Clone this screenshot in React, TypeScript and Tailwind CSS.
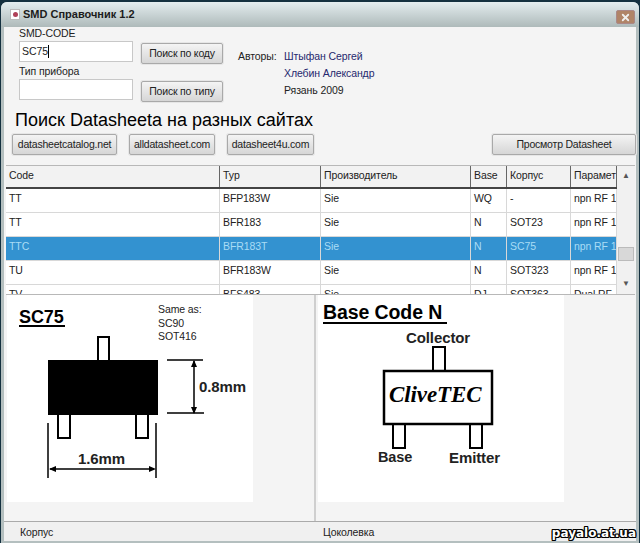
import { X } from 'lucide-react';

const COLUMNS = [
  { label: 'Code', width: 'w-[214px]' },
  { label: 'Typ', width: 'w-[101px]' },
  { label: 'Производитель', width: 'w-[150px]' },
  { label: 'Base', width: 'w-[36px]' },
  { label: 'Корпус', width: 'w-[64px]' },
  { label: 'Парамет', width: 'w-[46px]' },
];

const ROWS = [
  ['TT', 'BFP183W', 'Sie', 'WQ', '-', 'npn RF 12'],
  ['TT', 'BFR183', 'Sie', 'N', 'SOT23', 'npn RF 12'],
  ['TTC', 'BFR183T', 'Sie', 'N', 'SC75', 'npn RF 12'],
  ['TU', 'BFR183W', 'Sie', 'N', 'SOT323', 'npn RF 12'],
  ['TV', 'BFS483', 'Sie', 'DJ', 'SOT363', 'Dual RF'],
];

const WinButton = ({ children, className }: { children: string; className: string }) => (
  <button className={`h-[21px] rounded-[2px] border border-[#a9a9a9] bg-gradient-to-b from-[#f4f4f4] to-[#d6d6d6] text-[10.5px] leading-none tracking-[-0.2px] text-[#222] shadow-[0_0_0_1px_#e6e6e6] ${className}`}>
    {children}
  </button>
);

const TextBox = ({ value }: { value: string }) => (
  <div className="flex h-[21px] w-[114px] items-center border border-[#c8c8c8] bg-white pl-[2px] text-[#222]">
    {value}
    {value && <span className="h-[13px] w-px bg-black" />}
  </div>
);

const PackageDrawing = () => (
  <svg viewBox="0 0 246 207" className="block h-[207px] w-[246px]">
    <text x="12" y="28" fontSize="18" fontWeight="700" fontFamily="Liberation Sans">SC75</text>
    <rect x="12" y="30" width="46" height="2" />
    <text x="151" y="18" fontSize="10.5" fill="#222" fontFamily="Liberation Sans">Same as:</text>
    <text x="151" y="32" fontSize="10.5" fill="#222" fontFamily="Liberation Sans">SC90</text>
    <text x="151" y="45" fontSize="10.5" fill="#222" fontFamily="Liberation Sans">SOT416</text>
    <rect x="91" y="42" width="11" height="24" fill="#fff" stroke="#000" strokeWidth="2" />
    <rect x="51" y="118" width="12" height="25" fill="#fff" stroke="#000" strokeWidth="2" />
    <rect x="129" y="118" width="12" height="25" fill="#fff" stroke="#000" strokeWidth="2" />
    <rect x="41" y="65" width="110" height="55" />
    <g stroke="#000" strokeWidth="1.5">
      <path d="M160 65h36M160 118h37M187 66v52" />
      <path d="M41 128v55M149 128v55M43 174h104" />
    </g>
    <path d="M187 65l-3 7h6zM187 119l-3-7h6zM42 174l7-3v6zM149 174l-7-3v6z" />
    <text x="192" y="97" fontSize="15" fontWeight="700" fill="#222" fontFamily="Liberation Sans">0.8mm</text>
    <text x="71" y="169" fontSize="15" fontWeight="700" fill="#222" fontFamily="Liberation Sans">1.6mm</text>
  </svg>
);

const BaseDrawing = () => (
  <svg viewBox="0 0 246 207" className="block h-[207px] w-[246px]">
    <text x="5" y="24" fontSize="19.5" fontWeight="700" fontFamily="Liberation Sans">Base Code N</text>
    <rect x="5" y="27" width="124" height="2" />
    <text x="88" y="48" fontSize="15" fontWeight="700" fill="#222" fontFamily="Liberation Sans">Collector</text>
    <rect x="115" y="52" width="12" height="24" fill="#fff" stroke="#000" strokeWidth="2" />
    <rect x="75" y="129" width="12" height="24" fill="#fff" stroke="#000" strokeWidth="2" />
    <rect x="152" y="129" width="12" height="24" fill="#fff" stroke="#000" strokeWidth="2" />
    <rect x="66" y="76" width="108" height="53" fill="#fff" stroke="#000" strokeWidth="2.5" />
    <text x="71" y="107" fontSize="23" fontWeight="700" fontStyle="italic" fontFamily="Liberation Serif">CliveTEC</text>
    <text x="60" y="167" fontSize="14.5" fontWeight="700" fill="#222" fontFamily="Liberation Sans">Base</text>
    <text x="131" y="168" fontSize="15" fontWeight="700" fill="#222" fontFamily="Liberation Sans">Emitter</text>
  </svg>
);

export default function App() {
  return (
    <div className="relative h-[543px] w-[640px] overflow-hidden bg-[#14303f] font-['Liberation_Sans',sans-serif] text-[10.5px] tracking-[-0.1px] text-[#222]">
      <div className="mx-[1px] mt-[2px] flex h-[541px] flex-col rounded-t-[6px] bg-[#b4bfbf]">
        {/* title bar */}
        <div className="flex h-[25px] shrink-0 items-center rounded-t-[6px] bg-gradient-to-b from-[#e4edef] to-[#aebaba] pl-[9px] pr-[4px]">
          <div className="flex h-[11px] w-[10px] items-center justify-center border border-[#bbb] bg-white">
            <div className="h-[5px] w-[5px] rounded-full bg-[#b04058]" />
          </div>
          <span className="ml-[3px] text-[11px] font-bold tracking-normal text-[#1c1c1c]">SMD Справочник 1.2</span>
          <div className="ml-auto mt-[5px] flex h-[14px] w-[19px] items-center justify-center rounded-[2px] border border-[#a88] bg-[#b08468]">
            <X size={11} strokeWidth={4} className="text-[#eee]" />
          </div>
        </div>

        <div className="mx-[3px] mb-[2px] flex min-h-0 flex-1 flex-col bg-[#f4f4f4]">
          {/* search form */}
          <div className="flex h-[138px] shrink-0 flex-col pl-[15px] pt-[2px]">
            <div className="flex">
              <div className="w-[122px]">
                <div className="h-[9px] leading-[9px]">SMD-CODE</div>
                <div className="mt-[3px]"><TextBox value="SC75" /></div>
                <div className="mt-[3px] h-[13px] leading-[13px]">Тип прибора</div>
                <div className="mt-[1px]"><TextBox value="" /></div>
              </div>
              <div className="flex w-[82px] flex-col gap-[17px] pt-[14px]">
                <WinButton className="w-[82px]">Поиск по коду</WinButton>
                <WinButton className="w-[82px]">Поиск по типу</WinButton>
              </div>
              <div className="ml-[15px] flex pt-[21px] leading-[13px]">
                <span className="w-[46px]">Авторы:</span>
                <div className="flex flex-col gap-[4px] text-[#26286e]">
                  <span>Штыфан Сергей</span>
                  <span>Хлебин Александр</span>
                  <span className="text-[#222]">Рязань 2009</span>
                </div>
              </div>
            </div>
            <div className="-ml-[4px] mt-[8px] text-[18px] leading-[20px] tracking-normal text-black">Поиск Datasheeta на разных сайтах</div>
            <div className="mt-[4px] flex">
              <WinButton className="-ml-[7px] w-[105px]">datasheetcatalog.net</WinButton>
              <WinButton className="ml-[12px] w-[86px]">alldatasheet.com</WinButton>
              <WinButton className="ml-[12px] w-[87px]">datasheet4u.com</WinButton>
              <WinButton className="ml-auto w-[144px]">Просмотр Datasheet</WinButton>
            </div>
          </div>

          {/* table */}
          <div className="ml-[2px] mr-[1px] flex h-[130px] shrink-0 overflow-hidden border-y border-[#b8b8b8]">
            <div className="w-[611px] shrink-0 bg-white">
              <div className="flex h-[23px] items-center border-b-2 border-[#444] bg-[#f2f2f2]">
                {COLUMNS.map((col) => (
                  <div key={col.label} className={`${col.width} h-full overflow-hidden whitespace-nowrap border-r border-[#666] pl-[3px] leading-[18px]`}>
                    {col.label}
                  </div>
                ))}
              </div>
              {ROWS.map((row, i) => (
                <div
                  key={row[0] + row[1]}
                  className={`flex h-[24px] shrink-0 border-b border-[#d8d8d8] ${i === 2 ? 'bg-[#3392d0] text-[#a9dcf5]' : 'bg-white'}`}
                >
                  {row.map((cell, j) => (
                    <div key={j} className={`${COLUMNS[j].width} overflow-hidden whitespace-nowrap border-r border-[#d8d8d8] pl-[3px] leading-[18px]`}>
                      {cell}
                    </div>
                  ))}
                </div>
              ))}
            </div>
            <div className="relative flex flex-1 flex-col items-center justify-between bg-[#f1f1f1] py-[6px] text-[8px] leading-none text-[#555]">
              <span>▲</span>
              <div className="absolute left-[1px] right-[1px] top-[81px] h-[14px] border border-[#bbb] bg-[#d8d8d8]" />
              <span>▼</span>
            </div>
          </div>

          {/* drawings */}
          <div className="flex min-h-0 flex-1">
            <div className="w-[312px] shrink-0 border-r-2 border-[#cfcfcf] pl-[3px]">
              <div className="w-[246px] bg-white"><PackageDrawing /></div>
            </div>
            <div className="flex-1 pl-[2px]">
              <div className="w-[246px] bg-white"><BaseDrawing /></div>
            </div>
          </div>

          {/* status bar */}
          <div className="flex h-[20px] shrink-0 items-center border-t border-[#aaa] bg-[#f0f0f0] pt-[3px]">
            <span className="w-[319px] pl-[16px]">Корпус</span>
            <span>Цоколевка</span>
          </div>
        </div>
      </div>
      <span className="absolute bottom-[3px] right-[4px] font-['DejaVu_Sans',sans-serif] text-[12px] font-bold leading-[14px] tracking-normal text-white [text-shadow:1px_0_0_#000,-1px_0_0_#000,0_1px_0_#000,0_-1px_0_#000,1px_1px_0_#000,-1px_-1px_0_#000,1px_-1px_0_#000,-1px_1px_0_#000]">
        payalo.at.ua
      </span>
    </div>
  );
}
